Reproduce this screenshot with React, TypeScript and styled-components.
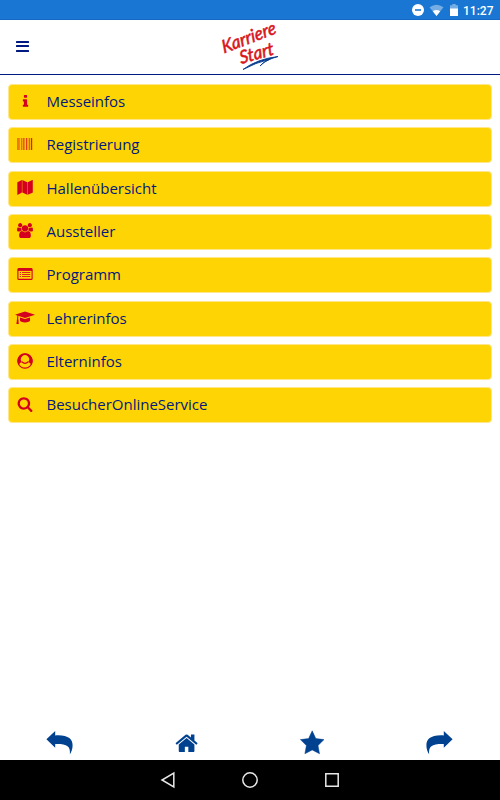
import React from 'react';
import styled, { createGlobalStyle } from 'styled-components';

const Global = createGlobalStyle`
  * { box-sizing: border-box; }
  body { margin: 0; background: #fff; }
`;

const Screen = styled.div`
  width: 500px;
  height: 800px;
  display: flex;
  flex-direction: column;
  background: #fff;
  font-family: 'Open Sans', sans-serif;
  overflow: hidden;
`;

const StatusBar = styled.div`
  height: 20px;
  flex: none;
  display: flex;
  align-items: center;
  justify-content: flex-end;
  padding-right: 7px;
  background: #1976d2;
  color: #fff;
  border-bottom: 1px solid #1469c4;
`;

const StatusIcons = styled.svg`
  display: block;
  width: 48px;
  height: 14px;
  margin-right: 4px;
`;

const Clock = styled.span`
  width: 30px;
  padding-top: 2px;
  font: 500 12px/20px Roboto, sans-serif;
  white-space: nowrap;
`;

const Header = styled.header`
  height: 55px;
  flex: none;
  display: grid;
  grid-template-columns: 1fr 80px 1fr;
  align-items: center;
  border-bottom: 1px solid #001a80;
`;

const MenuButton = styled.button`
  width: 14px;
  height: 12px;
  margin: 0 0 1px 15.5px;
  padding: 0;
  border: 0;
  background: none;
  display: flex;
  flex-direction: column;
  gap: 2.5px;
`;

const MenuLine = styled.span`
  flex: none;
  width: 13px;
  height: 2px;
  border-radius: 0.5px;
  background: #001a80;
`;

const Logo = styled.svg`
  display: block;
  width: 80px;
  height: 54px;
  overflow: visible;
`;

const List = styled.nav`
  flex: 1;
  display: flex;
  flex-direction: column;
  gap: 7.33px;
  padding: 9px 8px 0;
`;

const Row = styled.a`
  height: 36px;
  flex: none;
  display: flex;
  align-items: center;
  padding: 0 0 2px 6.5px;
  border: 1px solid #ffe68a;
  border-radius: 4px;
  background: #ffd404;
`;

const IconCell = styled.span`
  width: 20px;
  margin: 0 11.5px 0 -0.5px;
  display: flex;
  justify-content: center;
  color: #d5001f;
`;

const Icon = styled.svg<{ $w: number; $h: number }>`
  display: block;
  width: ${(p) => p.$w}px;
  height: ${(p) => p.$h}px;
`;

const Label = styled.span`
  font-size: 15px;
  line-height: 20px;
  letter-spacing: -0.01px;
  color: #001a80;
`;

const TabBar = styled.nav`
  height: 35px;
  flex: none;
  display: grid;
  grid-template-columns: repeat(4, 126.5px);
  justify-content: center;
  align-items: center;
  padding: 0 1px 0 0;
  color: #004190;
`;

const Tab = styled.a`
  display: flex;
  justify-content: center;
`;

const SystemBar = styled.div`
  height: 40px;
  flex: none;
  display: grid;
  grid-template-columns: repeat(3, 82px);
  justify-content: center;
  align-items: center;
  background: #000;
  color: #e8e8e8;
`;

const items = [
  {
    label: 'Messeinfos', w: 15, h: 15, box: '0 0 1792 1792',
    art: <path d="M1216 1344v128q0 26-19 45t-45 19h-512q-26 0-45-19t-19-45v-128q0-26 19-45t45-19h64v-384h-64q-26 0-45-19t-19-45v-128q0-26 19-45t45-19h384q26 0 45 19t19 45v576h64q26 0 45 19t19 45zm-128-1152v192q0 26-19 45t-45 19h-256q-26 0-45-19t-19-45v-192q0-26 19-45t45-19h256q26 0 45 19t19 45z" />,
  },
  {
    label: 'Registrierung', w: 16, h: 12, box: '0 0 16 12',
    art: (
      <>
        <path d="M0.5 0h1v12h-1zM14 0h1.2v12H14z" opacity=".85" />
        <path d="M2.5 0h.6v12h-.6zM4.3 0h1v12h-1zM6 0h.8v12H6zM7.5 0h.6v12h-.6zM9 0h1v12H9zM10.7 0h.6v12h-.6zM12.2 0h1v12h-1z" opacity=".7" />
      </>
    ),
  },
  {
    label: 'Hallenübersicht', w: 16, h: 15, box: '0 0 16 15',
    art: <path d="M.5 2.2 4.9.1v12.5L.9 14.8Q.3 15 .3 14.4V2.7q0-.3.2-.5zM5.3.1l5 2.1v12.6l-5-2.2zM15.2.1q.6-.2.6.4v11.7q0 .3-.3.5l-4.8 2.1V2.2z" />,
  },
  {
    label: 'Aussteller', w: 16, h: 15, box: '0 0 1920 1792',
    art: <path d="M593 896q-162 5-265 128h-134q-82 0-138-40.5t-56-118.5q0-353 124-353 6 0 43.5 21t97.5 42.5 119 21.5q67 0 133-23-5 37-5 66 0 139 81 256zm1071 637q0 120-73 189.5t-194 69.5h-874q-121 0-194-69.5t-73-189.5q0-53 3.5-103.5t14-109 26.5-108.5 43-97.5 62-81 85.5-53.5 111.5-20q10 0 43 21.5t73 48 107 48 135 21.5 135-21.5 107-48 73-48 43-21.5q61 0 111.5 20t85.5 53.5 62 81 43 97.5 26.5 108.5 14 109 3.5 103.5zm-1024-1277q0 106-75 181t-181 75-181-75-75-181 75-181 181-75 181 75 75 181zm704 384q0 159-112.5 271.5t-271.5 112.5-271.5-112.5-112.5-271.5 112.5-271.5 271.5-112.5 271.5 112.5 112.5 271.5zm576 225q0 78-56 118.5t-138 40.5h-134q-103-123-265-128 81-117 81-256 0-29-5-66 66 23 133 23 59 0 119-21.5t97.5-42.5 43.5-21q124 0 124 353zm-128-609q0 106-75 181t-181 75-181-75-75-181 75-181 181-75 181 75 75 181z" />,
  },
  {
    label: 'Programm', w: 16, h: 12, box: '0 0 16 12',
    art: (
      <>
        <rect x=".9" y=".6" width="14.2" height="10.8" rx="1" fill="none" stroke="currentColor" strokeWidth="1.1" />
        <path d="M.9.6h14.2v2.3H.9z" />
        <path d="M2.8 4H4v1H2.8zM2.8 6H4v1H2.8zM2.8 8H4v1H2.8zM5 4h8.3v1H5zM5 6h8.3v1H5zM5 8h8.3v1H5z" opacity=".8" />
      </>
    ),
  },
  {
    label: 'Lehrerinfos', w: 20, h: 14, box: '0 0 20 14',
    art: (
      <>
        <path d="M10 .5 19.4 3.6q.4.2 0 .4L10 7.1.6 4q-.4-.2 0-.4z" />
        <path d="M5.1 6.5 10 8.1l4.9-1.6.2 2.7q-.1 1-1.5 1.6-3.6 1.2-7.2 0-1.4-.6-1.5-1.6z" />
        <path d="M2.3 4.4h1l-.1 4.1q.7.5.2 1.3l.4 3q0 .3-.3.3H1.7q-.3 0-.3-.3l.5-3q-.4-.8.2-1.3z" />
      </>
    ),
  },
  {
    label: 'Elterninfos', w: 16, h: 16, box: '0 0 16 16',
    art: (
      <>
        <circle cx="8" cy="8" r="7.1" fill="none" stroke="currentColor" strokeWidth="1.1" />
        <path fillRule="evenodd" d="M8 .4a7.6 7.6 0 0 1 6.2 12q-.8-3.1-3-3.5a4.1 4.1 0 1 0-6.4 0q-2.2.4-3 3.5A7.6 7.6 0 0 1 8 .4z" />
        <path d="M4.7 8.8Q8 11.8 11.3 8.8" fill="none" stroke="currentColor" strokeWidth="1.2" />
      </>
    ),
  },
  {
    label: 'BesucherOnlineService', w: 16, h: 16, box: '0 0 1792 1792',
    art: <path d="M1216 832q0-185-131.5-316.5t-316.5-131.5-316.5 131.5-131.5 316.5 131.5 316.5 316.5 131.5 316.5-131.5 131.5-316.5zm512 832q0 52-38 90t-90 38q-54 0-90-38l-343-342q-179 124-399 124-143 0-273.5-55.5t-225-150-150-225-55.5-273.5 55.5-273.5 150-225 225-150 273.5-55.5 273.5 55.5 225 150 150 225 55.5 273.5q0 220-124 399l343 343q37 37 37 90z" />,
  },
];

const tabs = [
  { name: 'Zurück', art: <path d="M.4 9.2 9.2 1v4.4C22 4.6 26.7 9 26.6 15.5c0 3.5-1.2 6.4-2.7 8.8.6-8-2.6-10.4-14.7-10.2v3.6z" /> },
  { name: 'Start', art: <path transform="translate(1.4 1) scale(.0136)" d="M1472 992v480q0 26-19 45t-45 19h-384v-384h-256v384h-384q-26 0-45-19t-19-45v-480q0-1 .5-3t.5-3l575-474 575 474q1 2 1 6zm223-69l-62 74q-8 9-21 11h-3q-13 0-21-7l-692-577-692 577q-12 8-24 7-13-2-21-11l-62-74q-8-10-7-23.5t11-21.5l719-599q32-26 76-26t76 26l244 204v-195q0-14 9-23t23-9h192q14 0 23 9t9 23v408l219 182q10 8 11 21.5t-7 23.5z" /> },
  { name: 'Favoriten', art: <path d="m13.2.8 3.6 7.8 8.2 1-6 5.9 1.5 8.2-7.3-3.8-7.3 3.8 1.5-8.2-6-5.9 8.2-1z" stroke="currentColor" strokeWidth=".5" strokeLinejoin="round" /> },
  { name: 'Vor', art: <path d="M26.6 9.2 17.8 1v4.4C5 4.6.3 9 .4 15.5c0 3.5 1.2 6.4 2.7 8.8-.6-8 2.6-10.4 14.7-10.2v3.6z" /> },
];

export default function App() {
  return (
    <>
      <Global />
      <Screen>
        <StatusBar>
          <StatusIcons viewBox="0 0 48 14">
            <circle cx="7" cy="7" r="6" fill="#fff" />
            <path d="M4 6.2h6v1.6H4z" fill="#1976d2" />
            <path d="M18.5 4.2q7-5 14 0L25.5 13z" fill="#75ade4" />
            <path d="M21.8 8.2q3.7-2.6 7.4 0L25.5 13z" fill="#fff" />
            <path d="M39 2.3h2.3V1h3.4v1.3H47v4h-8z" fill="#75ade4" />
            <path d="M39 5.5h8V13h-8z" fill="#fff" />
          </StatusIcons>
          <Clock>11:27</Clock>
        </StatusBar>
        <Header>
          <MenuButton aria-label="Menü">
            <MenuLine />
            <MenuLine />
            <MenuLine />
          </MenuButton>
          <Logo viewBox="0 0 80 54" role="img" aria-label="Karriere Start">
            <g fill="#d9141b" stroke="#d9141b" strokeWidth=".55" fontFamily="Lato, sans-serif" fontStyle="italic" fontWeight="400">
              <text transform="translate(14 33.5) rotate(-21) skewX(-4)" fontSize="18" textLength="57" lengthAdjust="spacingAndGlyphs">Karriere</text>
              <text transform="translate(31 44) rotate(-16) skewX(-4)" fontSize="18" textLength="35" lengthAdjust="spacingAndGlyphs">Start</text>
            </g>
            <path d="M33 49.5Q47 39 68 36.5 55 40 50 46 54 41.5 59 39.5 46 42.5 33 49.5z" fill="#073b8e" stroke="#073b8e" strokeWidth=".9" />
          </Logo>
        </Header>
        <List>
          {items.map((it) => (
            <Row key={it.label}>
              <IconCell>
                <Icon $w={it.w} $h={it.h} viewBox={it.box} fill="currentColor">{it.art}</Icon>
              </IconCell>
              <Label>{it.label}</Label>
            </Row>
          ))}
        </List>
        <TabBar>
          {tabs.map((t) => (
            <Tab key={t.name} aria-label={t.name}>
              <Icon $w={27} $h={25} viewBox="0 0 27 25" fill="currentColor">{t.art}</Icon>
            </Tab>
          ))}
        </TabBar>
        <SystemBar>
          <Tab>
            <Icon $w={18} $h={18} viewBox="0 0 18 18" fill="none" stroke="currentColor" strokeWidth="1.5"><path d="M14.8 2v14L3 9z" /></Icon>
          </Tab>
          <Tab>
            <Icon $w={18} $h={18} viewBox="0 0 18 18" fill="none" stroke="currentColor" strokeWidth="1.5"><circle cx="9" cy="9" r="7.2" /></Icon>
          </Tab>
          <Tab>
            <Icon $w={18} $h={18} viewBox="0 0 18 18" fill="none" stroke="currentColor" strokeWidth="1.5"><path d="M2.8 2.8h12.4v12.4H2.8z" /></Icon>
          </Tab>
        </SystemBar>
      </Screen>
    </>
  );
}
